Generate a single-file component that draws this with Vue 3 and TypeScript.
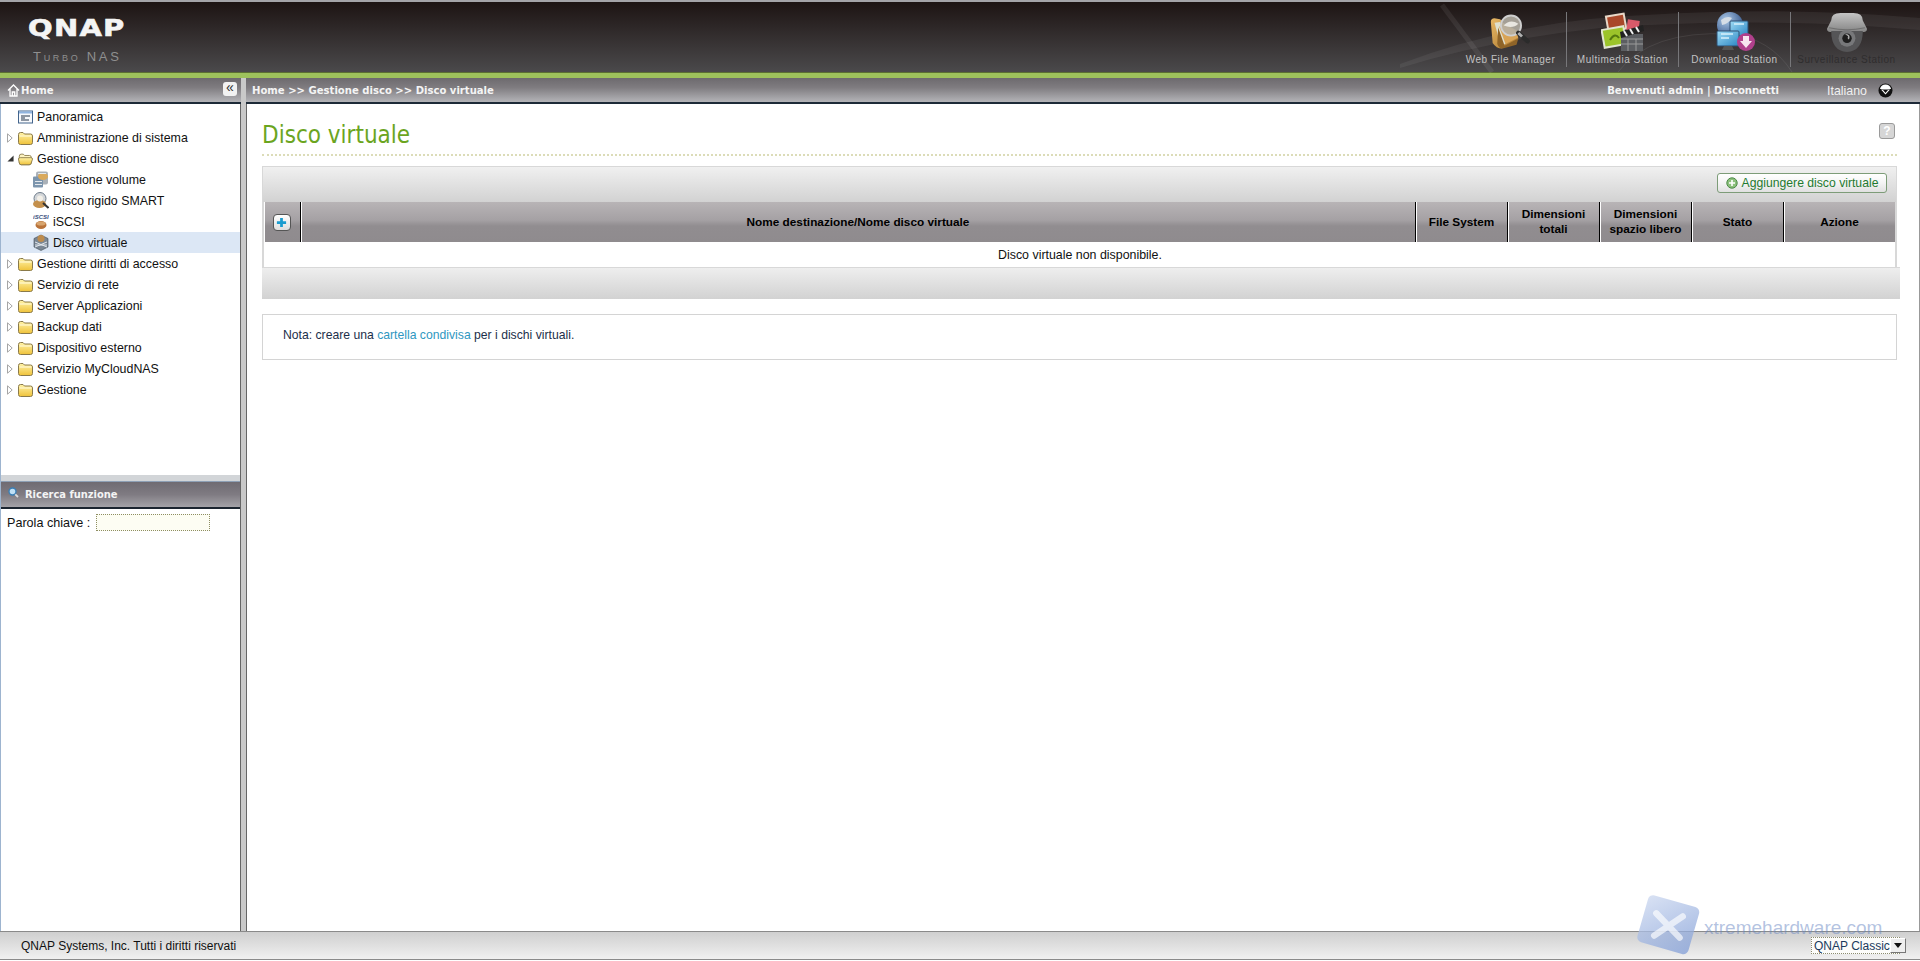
<script setup lang="ts">
interface TreeItem { label: string; level: number; icon: string; expander?: 'open' | 'closed'; selected?: boolean }
const tree: TreeItem[] = [
  { label: 'Panoramica', level: 0, icon: 'i-overview' },
  { label: 'Amministrazione di sistema', level: 0, icon: 'i-folder', expander: 'closed' },
  { label: 'Gestione disco', level: 0, icon: 'i-folder-open', expander: 'open' },
  { label: 'Gestione volume', level: 1, icon: 'i-volume' },
  { label: 'Disco rigido SMART', level: 1, icon: 'i-smart' },
  { label: 'iSCSI', level: 1, icon: 'i-iscsi' },
  { label: 'Disco virtuale', level: 1, icon: 'i-vdisk', selected: true },
  { label: 'Gestione diritti di accesso', level: 0, icon: 'i-folder', expander: 'closed' },
  { label: 'Servizio di rete', level: 0, icon: 'i-folder', expander: 'closed' },
  { label: 'Server Applicazioni', level: 0, icon: 'i-folder', expander: 'closed' },
  { label: 'Backup dati', level: 0, icon: 'i-folder', expander: 'closed' },
  { label: 'Dispositivo esterno', level: 0, icon: 'i-folder', expander: 'closed' },
  { label: 'Servizio MyCloudNAS', level: 0, icon: 'i-folder', expander: 'closed' },
  { label: 'Gestione', level: 0, icon: 'i-folder', expander: 'closed' },
]
const stations = [
  { label: 'Web File Manager', icon: 's-file' },
  { label: 'Multimedia Station', icon: 's-media' },
  { label: 'Download Station', icon: 's-download' },
  { label: 'Surveillance Station', icon: 's-camera', dim: true },
]
</script>

<template>
  <div class="page">
    <svg class="defs" aria-hidden="true">
      <defs>
        <linearGradient id="gf" x1="0" y1="0" x2="0" y2="1"><stop offset="0" stop-color="#fff3a8"/><stop offset="1" stop-color="#efc23a"/></linearGradient>
        <linearGradient id="gfm" x1="0" y1="0" x2="1" y2="1"><stop offset="0" stop-color="#e8b866"/><stop offset="1" stop-color="#a8752c"/></linearGradient>
        <linearGradient id="gcam" x1="0" y1="0" x2="0" y2="1"><stop offset="0" stop-color="#c4c4c4"/><stop offset="1" stop-color="#858585"/></linearGradient>
        <radialGradient id="gglobe" cx=".35" cy=".3" r=".8"><stop offset="0" stop-color="#a9c6e6"/><stop offset="1" stop-color="#27497f"/></radialGradient>
        <linearGradient id="gscreen" x1="0" y1="0" x2="1" y2="1"><stop offset="0" stop-color="#9fdcf5"/><stop offset="1" stop-color="#2a86c4"/></linearGradient>
        <linearGradient id="gwm" x1="0" y1="0" x2="1" y2="1"><stop offset="0" stop-color="#ccd8f0"/><stop offset="1" stop-color="#7f9cd6"/></linearGradient>
        <symbol id="i-folder" viewBox="0 0 15 14">
          <path d="M.5 3.5 Q.5 1.5 2.5 1.5 H5 L6.5 3 H12.5 Q14.5 3 14.5 5 V11.5 Q14.5 13.5 12.5 13.5 H2.5 Q.5 13.5 .5 11.5Z" fill="url(#gf)" stroke="#8a7a4a"/>
          <path d="M1.5 5 H13.5" stroke="#fffbe0"/>
        </symbol>
        <symbol id="i-folder-open" viewBox="0 0 17 14">
          <path d="M1.5 4 Q1.5 1.5 3.5 1.5 H6 L7.5 3 H13 Q15 3 15 5 V11.5 Q15 13.5 13 13.5 H3.5 Q1.5 13.5 1.5 11.5Z" fill="#fdf3c0" stroke="#8a7a4a"/>
          <path d="M.5 7 Q.5 5.5 2.5 5.5 H14.5 Q16.5 5.5 16.5 7 L15 11.5 Q14.5 13.5 12.5 13.5 H3.5 Q1.8 13.5 1.5 11.5Z" fill="url(#gf)" stroke="#8a7a4a"/>
        </symbol>
        <symbol id="i-overview" viewBox="0 0 15 13">
          <rect x=".5" y=".5" width="14" height="12" fill="#f7f9fc" stroke="#42648c"/>
          <rect x="1" y="1" width="13" height="2" fill="#8fb4e0"/>
          <path d="M3 5.5 H12 M3 7.5 H7 M3 9.5 H11" stroke="#24344a"/>
        </symbol>
        <symbol id="i-volume" viewBox="0 0 16 16">
          <rect x="3" y="0" width="12" height="13" rx="2" fill="#aab1b8"/>
          <rect x="0" y="5" width="10" height="11" rx="1" fill="#7c95ad"/>
          <ellipse cx="10" cy="5" rx="5" ry="3.4" fill="#d9a95c"/>
          <path d="M5 2 H13 M2 10 H9 M2 13 H9" stroke="#e4e8ec"/>
        </symbol>
        <symbol id="i-smart" viewBox="0 0 16 16">
          <circle cx="7" cy="6" r="6" fill="#d3d6d9" stroke="#6f7d8c"/>
          <ellipse cx="6.5" cy="11.5" rx="6.5" ry="4" fill="#c4904c"/>
          <circle cx="7" cy="6" r="3" fill="#f2efe8"/>
          <path d="M10 10.5 L15.5 15.5" stroke="#333" stroke-width="2"/>
        </symbol>
        <symbol id="i-iscsi" viewBox="0 0 16 16">
          <text x="0" y="5.5" font-size="6" font-style="italic" font-weight="700" font-family="Liberation Sans, sans-serif" fill="#3a4f80">iSCSI</text>
          <ellipse cx="8" cy="11.5" rx="5.5" ry="4" fill="#b9733a"/>
          <ellipse cx="8" cy="10" rx="4.5" ry="2" fill="#d8a56e"/>
        </symbol>
        <symbol id="i-vdisk" viewBox="0 0 16 17">
          <path d="M8 1 L15 4.5 V13 L8 16.5 L1 13 V4.5Z" fill="#7a8794" stroke="#3f4954" stroke-width=".6"/>
          <circle cx="8" cy="4.5" r="3.5" fill="#bd8c4e"/>
          <path d="M2 8 L14 13 M14 8 L2 13 M2 11 H14" stroke="#e2e7ec"/>
        </symbol>
        <symbol id="s-file" viewBox="0 0 48 40">
          <path d="M2 9 Q2 5 6 5 L12 6 Q15 7 15 10 L30 18 L32 28 L14 38 Q8 38 4 32Z" fill="url(#gfm)"/>
          <path d="M6 10 L12 9 L19 32 L13 36Z" fill="#dfe0cf"/>
          <path d="M10 15 L17 35 L32 27 L30 34 L15 38 Q11 38 9 33Z" fill="#8f6428"/>
          <path d="M11 14 L18 33 L32 26 L27 17Z" fill="#d9a456"/>
          <circle cx="24" cy="13" r="11" fill="#b5b1a6" fill-opacity=".88" stroke="#cfcfcf" stroke-width="2"/>
          <path d="M16 13 Q23 5 32 11 Q26 17 16 13Z" fill="#e8e6e0"/>
          <path d="M32 21 L42 30" stroke="#2b2b2b" stroke-width="5" stroke-linecap="round"/>
          <path d="M32 21 L36 25" stroke="#b0b0b0" stroke-width="3"/>
        </symbol>
        <symbol id="s-media" viewBox="0 0 44 40">
          <rect x="5" y="2" width="20" height="17" fill="#e8d8c8" transform="rotate(-10 15 10)"/>
          <rect x="7" y="4" width="16" height="13" fill="#a9482a" transform="rotate(-10 15 10)"/>
          <rect x="26" y="8" width="12" height="12" fill="#d85a6a" transform="rotate(8 32 14)"/>
          <rect x="1" y="15" width="24" height="20" fill="#e2e6d0" transform="rotate(-10 13 25)"/>
          <rect x="3" y="17" width="20" height="16" fill="#9cc42a" transform="rotate(-10 13 25)"/>
          <path d="M9 28 Q14 20 18 26" stroke="#54780f" stroke-width="2" fill="none"/>
          <rect x="20" y="22" width="22" height="17" fill="#5c5e62"/>
          <path d="M20 27 H42 M20 32 H42 M27 27 V39 M35 27 V39" stroke="#9a9a9a"/>
          <path d="M19 20 L42 13 L43 19 L20 26Z" fill="#222"/>
          <path d="M23 19 L26 24 M29 17 L32 22 M35 15 L38 20" stroke="#eee" stroke-width="2"/>
        </symbol>
        <symbol id="s-download" viewBox="0 0 44 40">
          <circle cx="17" cy="13" r="13" fill="url(#gglobe)"/>
          <path d="M8 8 Q14 3 19 6 Q15 12 9 13Z" fill="#d5dde6"/>
          <rect x="17" y="9" width="18" height="15" rx="1" fill="url(#gscreen)" stroke="#2d4f73"/>
          <rect x="4" y="19" width="22" height="15" rx="1" fill="url(#gscreen)" stroke="#2d4f73"/>
          <path d="M8 22 H20 M8 26 H16 M21 12 H31" stroke="#d8f1fb" stroke-width="1.4"/>
          <path d="M11 34 H19 L21 38 H9Z" fill="#555"/>
          <circle cx="33" cy="30" r="9" fill="#b0408c"/>
          <path d="M30 24 H36 V29 H39 L33 36 L27 29 H30Z" fill="#f8e4ef"/>
        </symbol>
        <symbol id="s-camera" viewBox="0 0 40 38">
          <path d="M5 8 Q5 1 14 1 H26 Q35 1 35 8 L39 16 Q39 19 36 19 H4 Q1 19 1 16Z" fill="url(#gcam)"/>
          <path d="M3 15 Q20 19 37 15" stroke="#6f6f6f" fill="none"/>
          <path d="M5 18 H35 Q35 37 20 38 Q5 37 5 18Z" fill="#555557"/>
          <circle cx="20" cy="25" r="8" fill="#77787a"/>
          <circle cx="20" cy="25" r="4.5" fill="#1e1e1e"/>
          <path d="M18 21 Q24 21 22 26 Q20 26 21 23Z" fill="#aaa"/>
        </symbol>
      </defs>
    </svg>

    <header class="header">
      <svg class="swoosh" viewBox="0 0 520 71" aria-hidden="true">
        <path d="M0 62 Q90 28 190 17 Q360 2 520 16 V28 Q360 14 200 26 Q90 38 0 66Z" fill="#fff" fill-opacity=".06"/>
        <path d="M42 3 Q62 30 92 70" stroke="#fff" stroke-opacity=".07" stroke-width="5" fill="none"/>
        <path d="M218 70 Q250 28 330 32 Q370 36 392 70" stroke="#fff" stroke-opacity=".08" fill="none"/>
      </svg>
      <div class="logo">
        <div class="logo-mark">QNAP</div>
        <div class="logo-sub">Turbo NAS</div>
      </div>
      <nav class="stations">
        <div v-for="s in stations" :key="s.label" class="station" :class="{ dim: s.dim }">
          <svg class="station-icon"><use :href="'#' + s.icon"/></svg>
          <span>{{ s.label }}</span>
        </div>
      </nav>
    </header>

    <div class="body">
      <aside class="side">
        <div class="bar side-bar">
          <svg class="home-ico" viewBox="0 0 13 13"><path d="M1 6.5 L6.5 1 L12 6.5 M3 5 V12 H10 V5 M5.3 12 V8 H7.7 V12" stroke="#fff" stroke-width="1.3" fill="none"/></svg>
          <span class="bar-title">Home</span>
          <span class="collapse">«</span>
        </div>
        <div class="side-frame">
          <ul class="tree">
            <li v-for="t in tree" :key="t.label" class="row" :class="['l' + t.level, { sel: t.selected }]">
              <span v-if="t.level === 0" class="exp">
                <svg v-if="t.expander === 'closed'" viewBox="0 0 6 10" class="exp-c"><path d="M.5 .8 L5.2 5 L.5 9.2Z" fill="#fff" stroke="#a5a5a5"/></svg>
                <svg v-else-if="t.expander === 'open'" viewBox="0 0 8 8" class="exp-o"><path d="M7.5 .5 V7.5 H.5Z" fill="#333"/></svg>
              </span>
              <svg class="ico"><use :href="'#' + t.icon"/></svg>
              <span class="lbl">{{ t.label }}</span>
            </li>
          </ul>
          <section class="search">
            <div class="search-gap"></div>
            <div class="search-head">
              <svg class="search-ico" viewBox="0 0 11 11"><circle cx="4.5" cy="4.5" r="3.5" fill="#bfe0f5" stroke="#3b7fb5" stroke-width="1.4"/><path d="M7.3 7.3 L10 10" stroke="#ddd" stroke-width="1.8"/></svg>
              Ricerca funzione
            </div>
            <div class="search-form">
              <label>Parola chiave :</label>
              <span class="kw"></span>
            </div>
          </section>
        </div>
      </aside>

      <main class="main">
        <div class="bar main-bar">
          <span class="bar-title">Home &gt;&gt; Gestione disco &gt;&gt; Disco virtuale</span>
          <span class="bar-title welcome">Benvenuti admin | Disconnetti</span>
          <span class="lang">Italiano</span>
          <svg class="lang-btn" viewBox="0 0 15 15"><circle cx="7.5" cy="7.5" r="7" fill="#111"/><path d="M2 6 A5.6 5.6 0 0 1 13 6Z" fill="#fff"/><path d="M3 6.5 H12 L7.5 11.5Z" fill="#fff"/><path d="M5 7 H10 L7.5 10Z" fill="#111"/></svg>
        </div>
        <div class="content">
          <div class="title-row">
            <h1>Disco virtuale</h1>
            <span class="help">?</span>
          </div>
          <div class="grid-box">
            <div class="toolbar">
              <button class="add" type="button">
                <svg viewBox="0 0 12 12" class="add-ico"><circle cx="6" cy="6" r="5.2" fill="#8cc07c" stroke="#4d8a48"/><path d="M3 6 H9 M6 3 V9" stroke="#fff" stroke-width="1.6"/></svg>
                Aggiungere disco virtuale
              </button>
            </div>
            <div class="table">
              <div class="thead">
                <div class="th c-plus"><span class="plus"><svg viewBox="0 0 12 12"><path d="M6 1 V11 M1 6 H11" stroke="#1b9ccf" stroke-width="3"/></svg></span></div>
                <div class="th c-name">Nome destinazione/Nome disco virtuale</div>
                <div class="th c-n">File System</div>
                <div class="th c-n">Dimensioni<br>totali</div>
                <div class="th c-n">Dimensioni<br>spazio libero</div>
                <div class="th c-n">Stato</div>
                <div class="th c-act">Azione</div>
              </div>
              <div class="empty">Disco virtuale non disponibile.</div>
            </div>
            <div class="tfoot"></div>
          </div>
          <div class="note">Nota: creare una <a>cartella condivisa</a> per i dischi virtuali.</div>
        </div>
      </main>
    </div>

    <footer class="footer">
      <span>QNAP Systems, Inc. Tutti i diritti riservati</span>
      <div class="theme"><span>QNAP Classic</span><span class="theme-btn"><svg viewBox="0 0 8 5"><path d="M0 0 H8 L4 5Z" fill="#111"/></svg></span></div>
    </footer>

    <div class="watermark" aria-hidden="true">
      <svg class="wm-logo" viewBox="0 0 66 60">
        <rect x="7" y="6" width="50" height="46" rx="5" fill="url(#gwm)" fill-opacity=".75" transform="rotate(16 33 30)"/>
        <path d="M21 18 L43 41 M46 21 L19 39" stroke="#fff" stroke-opacity=".65" stroke-width="6" stroke-linecap="round"/>
      </svg>
      <span class="wm-text">xtremehardware.com</span>
    </div>
  </div>
</template>

<style>
html, body { margin: 0; padding: 0; background: #fff; overflow: hidden; }
</style>

<style scoped>
.page {
  height: 961px;
  display: flex;
  flex-direction: column;
  position: relative;
  overflow: hidden;
  font-family: "Liberation Sans", Arial, sans-serif;
  font-size: 12px;
  color: #111;
  background: #fff;
}
.defs { position: absolute; width: 0; height: 0; }

.header {
  height: 78px;
  box-sizing: border-box;
  flex: none;
  position: relative;
  display: flex;
  justify-content: space-between;
  border-top: 2px solid #a4a4a8;
  border-bottom: 5px solid #9ec25c;
  background: linear-gradient(#1d1413, #4b4a4c);
  box-shadow: inset 0 -1px 0 #5c7034;
}
.swoosh { position: absolute; right: 0; top: 0; width: 520px; height: 71px; }
.logo { padding: 17px 0 0 28px; position: relative; }
.logo-mark {
  font-family: "DejaVu Sans", sans-serif;
  font-weight: 700;
  font-size: 23px;
  line-height: 19px;
  color: #f4f4f4;
  letter-spacing: 1px;
  -webkit-text-stroke: .6px #f4f4f4;
  transform: scaleX(1.26);
  transform-origin: left center;
}
.logo-sub {
  margin: 13px 0 0 5px;
  font-size: 13px;
  line-height: 12px;
  font-variant: small-caps;
  letter-spacing: 2.7px;
  color: #8f8f8f;
}
.stations { display: flex; padding: 10px 18px 0 0; position: relative; }
.station {
  width: 111px;
  height: 55px;
  border-right: 1px solid #77777a;
  display: flex;
  flex-direction: column;
  align-items: center;
  color: #c2c2c2;
  font-size: 10px;
  letter-spacing: .5px;
  white-space: nowrap;
}
.station:last-child { border-right: 0; }
.station.dim { color: #2f2d2e; }
.station-icon { width: 44px; height: 40px; margin-bottom: 2px; }

.body { flex: 1; display: flex; min-height: 0; background: #c9c9c9; }
.bar {
  height: 26px;
  box-sizing: border-box;
  flex: none;
  display: flex;
  align-items: center;
  padding-top: 1px;
  background: linear-gradient(#6d6a6e, #7f7c80 40%, #b4b4b8);
  border-bottom: 2px solid #1d2a38;
}
.bar-title {
  font-family: "DejaVu Sans Condensed", "DejaVu Sans", sans-serif;
  font-stretch: condensed;
  font-weight: 700;
  font-size: 11.2px;
  color: #f4f4f4;
  white-space: nowrap;
}
.side { width: 241px; flex: none; display: flex; flex-direction: column; }
.side-bar { padding: 0 4px 0 7px; }
.home-ico { width: 13px; height: 13px; margin-right: 1px; }
.collapse {
  margin-left: auto;
  margin-bottom: 2px;
  width: 14px;
  height: 14px;
  background: #f2f2f2;
  border-radius: 3px;
  color: #333;
  font-size: 14px;
  line-height: 11px;
  text-align: center;
}
.side-frame {
  flex: 1;
  min-height: 0;
  display: flex;
  flex-direction: column;
  justify-content: space-between;
  background: #fff;
  border-left: 1px solid #9db4cf;
  border-right: 1px solid #666;
}
.tree { list-style: none; margin: 2px 0 0; padding: 0; }
.row { height: 21px; display: flex; align-items: center; color: #111; font-size: 12.4px; }
.row.sel { background: #dce7f5; }
.l0 { padding-left: 6px; }
.l1 { padding-left: 32px; }
.exp { width: 11px; flex: none; display: flex; align-items: center; }
.exp-c { width: 6px; height: 10px; }
.exp-o { width: 7px; height: 7px; }
.ico { width: 15px; height: 14px; flex: none; margin-right: 4px; }
.l1 .ico { width: 16px; height: 17px; }

.search { height: 456px; flex: none; }
.search-gap { height: 6px; background: #d2d5d8; }
.search-head {
  height: 28px;
  box-sizing: border-box;
  display: flex;
  align-items: center;
  gap: 6px;
  padding-left: 7px;
  border-top: 1px solid #8ea0b5;
  border-bottom: 2px solid #1c2530;
  background: linear-gradient(#6f6b72, #7f7b82 50%, #a5a3a8);
  font-family: "DejaVu Sans Condensed", "DejaVu Sans", sans-serif;
  font-stretch: condensed;
  font-weight: 700;
  font-size: 11px;
  color: #f4f4f4;
}
.search-ico { width: 11px; height: 11px; margin-bottom: 4px; }
.search-form { display: flex; align-items: center; gap: 6px; padding: 5px 0 0 6px; font-size: 12.6px; }
.kw { width: 114px; height: 17px; box-sizing: border-box; background: #fdfdf3; border: 1px dotted #8e8e62; }

.main { flex: 1; min-width: 0; margin-left: 5px; display: flex; flex-direction: column; }
.main-bar { padding: 1px 27px 0 6px; }
.welcome { margin-left: auto; }
.lang { margin-left: 48px; font-size: 12.4px; color: #f0f0f0; }
.lang-btn { width: 15px; height: 15px; margin-left: 11px; }
.content {
  flex: 1;
  background: #fff;
  border-left: 1px solid #666;
  border-right: 1px solid #999;
  padding: 0 22px 0 15px;
}
.title-row {
  height: 50px;
  box-sizing: content-box;
  display: flex;
  justify-content: space-between;
  align-items: flex-start;
  border-bottom: 2px dotted #dcdcb8;
}
h1 {
  margin: 17px 0 0;
  font-family: "DejaVu Sans Condensed", "DejaVu Sans", sans-serif;
  font-stretch: condensed;
  font-weight: 400;
  font-size: 24px;
  line-height: 28px;
  color: #6ba51f;
}
.help {
  margin: 19px 2px 0 0;
  width: 14px;
  height: 14px;
  border: 1px solid #9a9a9a;
  border-radius: 3px;
  background: #d6d6d6;
  color: #fff;
  font-weight: 700;
  font-size: 12px;
  line-height: 14px;
  text-align: center;
}
.grid-box { margin-top: 10px; margin-right: -3px; }
.toolbar {
  height: 36px;
  box-sizing: border-box;
  margin-right: 3px;
  display: flex;
  justify-content: flex-end;
  padding: 6px 9px 0 0;
  border: 1px solid #d8d8d8;
  border-bottom: 0;
  background: linear-gradient(#f0f0f0, #d2d2d2);
}
.add {
  height: 20px;
  width: 170px;
  box-sizing: border-box;
  padding: 0;
  display: flex;
  align-items: center;
  justify-content: center;
  gap: 4px;
  border: 1px solid #7d9c78;
  border-radius: 3px;
  background: linear-gradient(#fff, #f4f4f4 50%, #e0e0e0);
  font: 12.2px "Liberation Sans", Arial, sans-serif;
  color: #1f7a30;
}
.add-ico { width: 12px; height: 12px; }
.table {
  margin: 0 3px 0 0;
  padding-left: 1px;
  border-left: 2px solid #d8d8d8;
  border-right: 2px solid #d8d8d8;
}
.thead { display: flex; height: 40px; background: linear-gradient(#b8b4b6, #a5a1a4 45%, #918d90 60%, #8f8b8e); }
.th {
  display: flex;
  align-items: center;
  justify-content: center;
  box-sizing: border-box;
  text-align: center;
  font-weight: 700;
  font-size: 11.8px;
  line-height: 15px;
  color: #000;
  border-right: 1px solid #000;
  box-shadow: 1px 0 0 #fff;
  position: relative;
}
.c-plus { width: 36px; }
.c-name { flex: 1; }
.c-n { width: 92px; }
.c-act { width: 111px; border-right: 0; box-shadow: none; }
.plus {
  width: 18px;
  height: 17px;
  box-sizing: border-box;
  padding: 2px;
  display: flex;
  margin-right: 2px;
  border: 1px solid #555;
  border-radius: 4px;
  background: linear-gradient(#fff, #dedede);
}
.empty {
  height: 25px;
  line-height: 26px;
  text-align: center;
  font-size: 12.4px;
  color: #111;
  background: #fff;
}
.tfoot {
  height: 31px;
  border-top: 1px solid #d8d8d8;
  background: linear-gradient(#eeeeee, #d2d2d2);
}
.note {
  margin: 15px 0 0 0;
  height: 46px;
  box-sizing: border-box;
  padding-left: 20px;
  border: 1px solid #d4d4d4;
  line-height: 40px;
  font-size: 12.2px;
  color: #1c2f4a;
}
.note a { color: #2f97c1; }

.footer {
  height: 29px;
  flex: none;
  box-sizing: border-box;
  margin-bottom: 1px;
  display: flex;
  align-items: center;
  justify-content: space-between;
  padding: 0 20px 0 21px;
  border-top: 1px solid #8a8a8a;
  border-bottom: 1px solid #8a8a8a;
  background: linear-gradient(#cfcfcf, #f0f0f0);
  color: #111;
  font-size: 12px;
}
.theme {
  width: 89px;
  height: 17px;
  box-sizing: border-box;
  display: flex;
  align-items: center;
  justify-content: space-between;
  padding-left: 2px;
  border: 1px dotted #8c8c70;
  background: #fcfcfa;
  color: #1a3a5c;
  font-size: 12px;
  white-space: nowrap;
}
.theme-btn {
  width: 16px;
  height: 15px;
  box-sizing: border-box;
  padding: 4px 3px;
  display: flex;
  background: #eee;
  border: 1px solid #777;
  border-top-color: #fff;
  border-left-color: #fff;
}
.watermark {
  position: absolute;
  left: 1634px;
  top: 894px;
  display: flex;
  align-items: flex-end;
  pointer-events: none;
}
.wm-logo { width: 70px; height: 64px; }
.wm-text {
  margin: 0 0 18px 0;
  font-size: 19px;
  line-height: 24px;
  color: rgba(105, 135, 195, .5);
  white-space: nowrap;
}
</style>
